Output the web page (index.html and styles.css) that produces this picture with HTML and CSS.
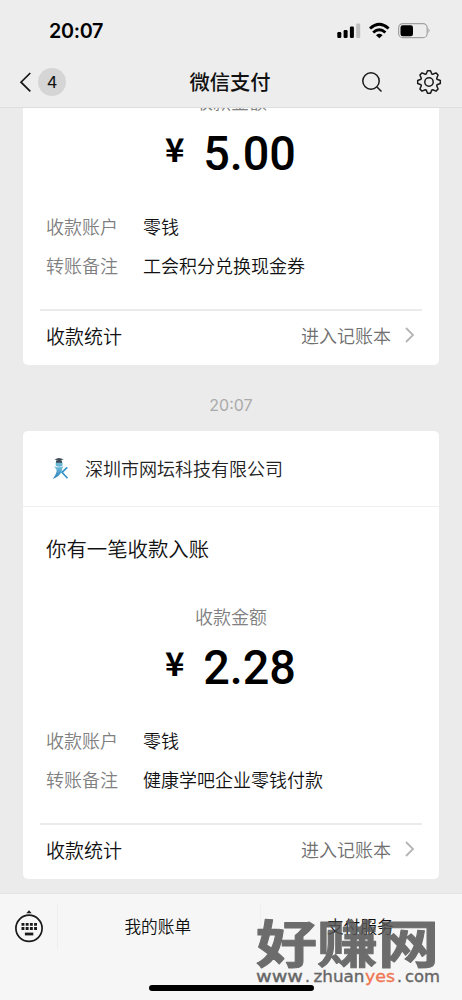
FILE: index.html
```html
<!DOCTYPE html>
<html lang="zh-CN">
<head>
<meta charset="utf-8">
<title>微信支付</title>
<link rel="stylesheet" href="styles.css">
</head>
<body>
<div class="phone">
  <header class="top">
    <div class="status">
      <span class="clock">20:07</span>
      <svg class="signals" width="96" height="18" viewBox="0 0 96 18">
        <rect x="2.300" y="10" width="4" height="6" rx="1.2"/>
        <rect x="8.600" y="8" width="4" height="8" rx="1.2"/>
        <rect x="14.900" y="4.500" width="4" height="11.500" rx="1.2"/>
        <rect x="21.200" y="1.500" width="4" height="14.500" rx="1.2" fill="#bfbfbf"/>
        <g fill="none" stroke="#000" stroke-width="2.900">
          <path d="M35 6.500Q44.300-1.800 53.600 6.500"/>
          <path d="M38.200 10.500Q44.300 5 50.400 10.500"/>
        </g>
        <path d="M41 13.200Q44.300 10.500 47.600 13.200L44.300 16.300Z"/>
        <rect x="63.600" y="1.600" width="28.600" height="14" rx="4.200" fill="none" stroke="#a2a2a2" stroke-width="1.200"/>
        <rect x="65.500" y="3.200" width="12.500" height="11" rx="2.300"/>
        <path d="M93.500 6q2 2.300 0 5Z" fill="#999"/>
      </svg>
    </div>
    <nav class="nav">
      <div class="back">
        <svg width="14" height="22" viewBox="0 0 14 22"><path d="M12.300 2L3 11.200L12.300 20.400" fill="none" stroke="#161616" stroke-width="1.700"/></svg>
        <span class="count">4</span>
      </div>
      <h1 class="title">微信支付</h1>
      <div class="tools">
        <svg width="24" height="24" viewBox="0 0 24 24" fill="none" stroke="#1a1a1a" stroke-width="1.500"><circle cx="11" cy="11" r="8.200"/><path d="M17 17L21.500 21.500"/></svg>
        <svg width="26" height="26" viewBox="-13 -13 26 26" fill="none" stroke="#1a1a1a" stroke-width="1.500" stroke-linejoin="round"><path d="M-2.800-8L-1.500-11.300H1.500L2.800-8L3.700-7.700L7-9.100L9.100-7L7.700-3.700L8-2.800L11.300-1.500V1.500L8 2.800L7.700 3.700L9.100 7L7 9.100L3.700 7.700L2.800 8L1.500 11.300H-1.500L-2.800 8L-3.700 7.700L-7 9.100L-9.100 7L-7.700 3.700L-8 2.800L-11.300 1.500V-1.500L-8-2.800L-7.700-3.700L-9.100-7L-7-9.100L-3.700-7.700Z"/><circle r="4.200"/></svg>
      </div>
    </nav>
  </header>

  <main class="feed">
    <article class="card card-scrolled">
      <div class="caption">收款金额</div>
      <div class="amount"><span class="yen">¥</span><span class="value">5.00</span></div>
      <dl class="fields">
        <div class="field"><dt class="key">收款账户</dt><dd class="val">零钱</dd></div>
        <div class="field"><dt class="key">转账备注</dt><dd class="val">工会积分兑换现金券</dd></div>
      </dl>
      <div class="stats"><span class="stats-name">收款统计</span><span class="link">进入记账本</span><svg class="arrow" width="12" height="18" viewBox="0 0 12 18"><path d="M2 2L9 9L2 16" fill="none" stroke="#b5b5b5" stroke-width="1.800"/></svg></div>
    </article>

    <time class="time">20:07</time>

    <article class="card">
      <div class="sender">
        <svg class="logo" width="18" height="24" viewBox="0 0 18 24">
          <defs><linearGradient id="figure" x1="0" y1="0" x2="0" y2="1"><stop offset="0" stop-color="#76c1df"/><stop offset="1" stop-color="#237bb5"/></linearGradient></defs>
          <path d="M4.700 5.300h6.800v3.500q-3.400 2-6.800 0Z" fill="#68b5d3"/>
          <path d="M3.400 2.200L8 1L12.800 2.200L8 3.700ZM5 3.500h6v2.300H5Z" fill="#394855"/>
          <path d="M2.600 9.300Q7 11 12.500 9.300Q10.500 12 10.800 14.200Q8.500 19.500 1.800 21.900Q4.800 18.500 5.700 14Q5.300 11.500 2.600 9.300Z" fill="url(#figure)"/>
          <path d="M16.300 10.300L11 15.300L16.500 21.200" fill="none" stroke="#3192c8" stroke-width="1.600"/>
        </svg>
        <span>深圳市网坛科技有限公司</span>
      </div>
      <h2 class="headline">你有一笔收款入账</h2>
      <div class="caption">收款金额</div>
      <div class="amount"><span class="yen">¥</span><span class="value">2.28</span></div>
      <dl class="fields">
        <div class="field"><dt class="key">收款账户</dt><dd class="val">零钱</dd></div>
        <div class="field"><dt class="key">转账备注</dt><dd class="val">健康学吧企业零钱付款</dd></div>
      </dl>
      <div class="stats"><span class="stats-name">收款统计</span><span class="link">进入记账本</span><svg class="arrow" width="12" height="18" viewBox="0 0 12 18"><path d="M2 2L9 9L2 16" fill="none" stroke="#b5b5b5" stroke-width="1.800"/></svg></div>
    </article>
  </main>

  <footer class="bottom">
    <div class="menu">
      <div class="keyboard">
        <svg width="30" height="34" viewBox="0 0 30 34">
          <path d="M12.300 3.200L15 .3L17.700 3.200Z" fill="#1a1a1a"/>
          <circle cx="15" cy="18.300" r="13.100" fill="none" stroke="#1a1a1a" stroke-width="1.700"/>
          <path d="M7.500 14.300H23M7.500 18.500H23" stroke="#1a1a1a" stroke-width="2.800" stroke-dasharray="2.900 1.300"/>
          <path d="M10.900 24H19.300" stroke="#1a1a1a" stroke-width="2.800"/>
        </svg>
      </div>
      <div class="item">我的账单</div>
      <div class="item">支付服务</div>
    </div>
    <div class="home"></div>
    <svg class="watermark" width="190" height="72" viewBox="0 0 190 72">
      <text class="mark-name" transform="translate(3 46) scale(1 .84)" x="0" y="0">好赚网</text>
      <text class="mark-url" y="65"><tspan x="3" textLength="47" lengthAdjust="spacingAndGlyphs">www</tspan><tspan x="52">.</tspan><tspan x="60.500" textLength="51" lengthAdjust="spacingAndGlyphs">zhuan</tspan><tspan class="mark-accent" x="112" textLength="30" lengthAdjust="spacingAndGlyphs">yes</tspan><tspan x="144">.</tspan><tspan x="152" textLength="35" lengthAdjust="spacingAndGlyphs">com</tspan></text>
    </svg>
  </footer>
</div>
</body>
</html>
```
FILE: styles.css
```css
* { box-sizing: border-box; }
body, h1, h2, dl, dd { margin: 0; font-weight: 350; }
body { background: #ebebeb; font-family: "Noto Sans CJK SC DemiLight", "Noto Sans CJK SC", sans-serif; color: #111; }
svg { display: block; flex: none; }
.phone { width: 462px; height: 1000px; display: flex; flex-direction: column; overflow: hidden; }

.top { height: 108px; flex: none; background: #ededed; border-bottom: 1px solid #dedede; }
.status { height: 56px; padding: 6px 31px 0 49px; display: flex; align-items: center; justify-content: space-between; }
.clock { font: 600 19.800px/24px Inter, sans-serif; letter-spacing: -.35px; color: #000; }
.nav { height: 51px; padding: 0 20px 0 18px; display: grid; grid-template-columns: 1fr auto 1fr; align-items: center; }
.back { display: flex; align-items: center; gap: 6px; }
.count { width: 28px; height: 28px; border-radius: 50%; background: #d5d5d5; font: 400 16.500px/28px Inter, sans-serif; text-align: center; }
.title { font-family: "Noto Sans CJK SC", sans-serif; font-size: 20.300px; line-height: 28px; padding-bottom: 2px; font-weight: 500; }
.tools { display: flex; justify-content: flex-end; align-items: center; gap: 32px; }

.feed { height: 785px; flex: none; padding: 0 23px; overflow: hidden; }
.card { background: #fff; border-radius: 5px; width: 416px; }
.card-scrolled { margin-top: -31px; }
.card-scrolled .caption { line-height: 48px; }
.sender { height: 76px; border-bottom: 1px solid #f0f0f0; padding-left: 28px; display: flex; align-items: center; gap: 16px; font-size: 18px; color: #222; }
.sender span { padding-bottom: 1px; }
.headline { height: 84px; line-height: 82px; padding-left: 23px; font-size: 20.400px; }
.caption { height: 52px; line-height: 50px; text-align: center; font-size: 18px; font-weight: 300; color: #808080; }
.amount { height: 50px; padding-left: 142px; display: flex; align-items: center; color: #000; font-family: Roboto, sans-serif; font-weight: 500; }
.yen { width: 38px; font: 700 33px/36px "Noto Sans CJK SC", sans-serif; padding-bottom: 13px; }
.value { font-size: 49px; line-height: 50px; transform: scaleX(.955); transform-origin: 3px 50%; }
.fields { padding: 28px 23px 24px; }
.field { height: 39px; padding-bottom: 2px; display: flex; align-items: center; font-size: 18px; }
.key { width: 97px; color: #808080; font-weight: 300; }
.stats { height: 56px; margin: 0 17px; padding: 0 6px 6px; border-top: 2px solid #ebebeb; display: flex; align-items: center; }
.stats-name { flex: 1; font-size: 19px; }
.link { font-size: 18px; color: #707070; font-weight: 300; }
.arrow { margin-left: 13px; }
.time { display: block; height: 66px; line-height: 80px; text-align: center; font-family: Inter, sans-serif; font-size: 16px; font-weight: 400; color: #aaa; }

.bottom { position: relative; height: 107px; flex: none; background: #f6f6f6; border-top: 1px solid #e4e4e4; }
.menu { display: flex; padding-top: 10px; }
.keyboard { width: 57px; height: 46px; display: flex; align-items: center; justify-content: center; }
.item { flex: 1; height: 46px; padding-right: 2px; line-height: 45px; border-left: 1px solid #efefef; text-align: center; font-size: 16.700px; }
.home { width: 165px; height: 6px; border-radius: 3px; background: #000; margin: 35px auto 0; }
.watermark { position: absolute; left: 253px; top: 23px; }
.mark-name { font: 700 61px "Noto Sans CJK SC", sans-serif; fill: #555; stroke: #555; stroke-width: 1.200px; stroke-linejoin: round; opacity: .85; }
.mark-url { font: 400 15.500px "DejaVu Sans", sans-serif; fill: #666; stroke: #666; stroke-width: .35px; }
.mark-accent { fill: #ef7753; stroke: #ef7753; }
```
